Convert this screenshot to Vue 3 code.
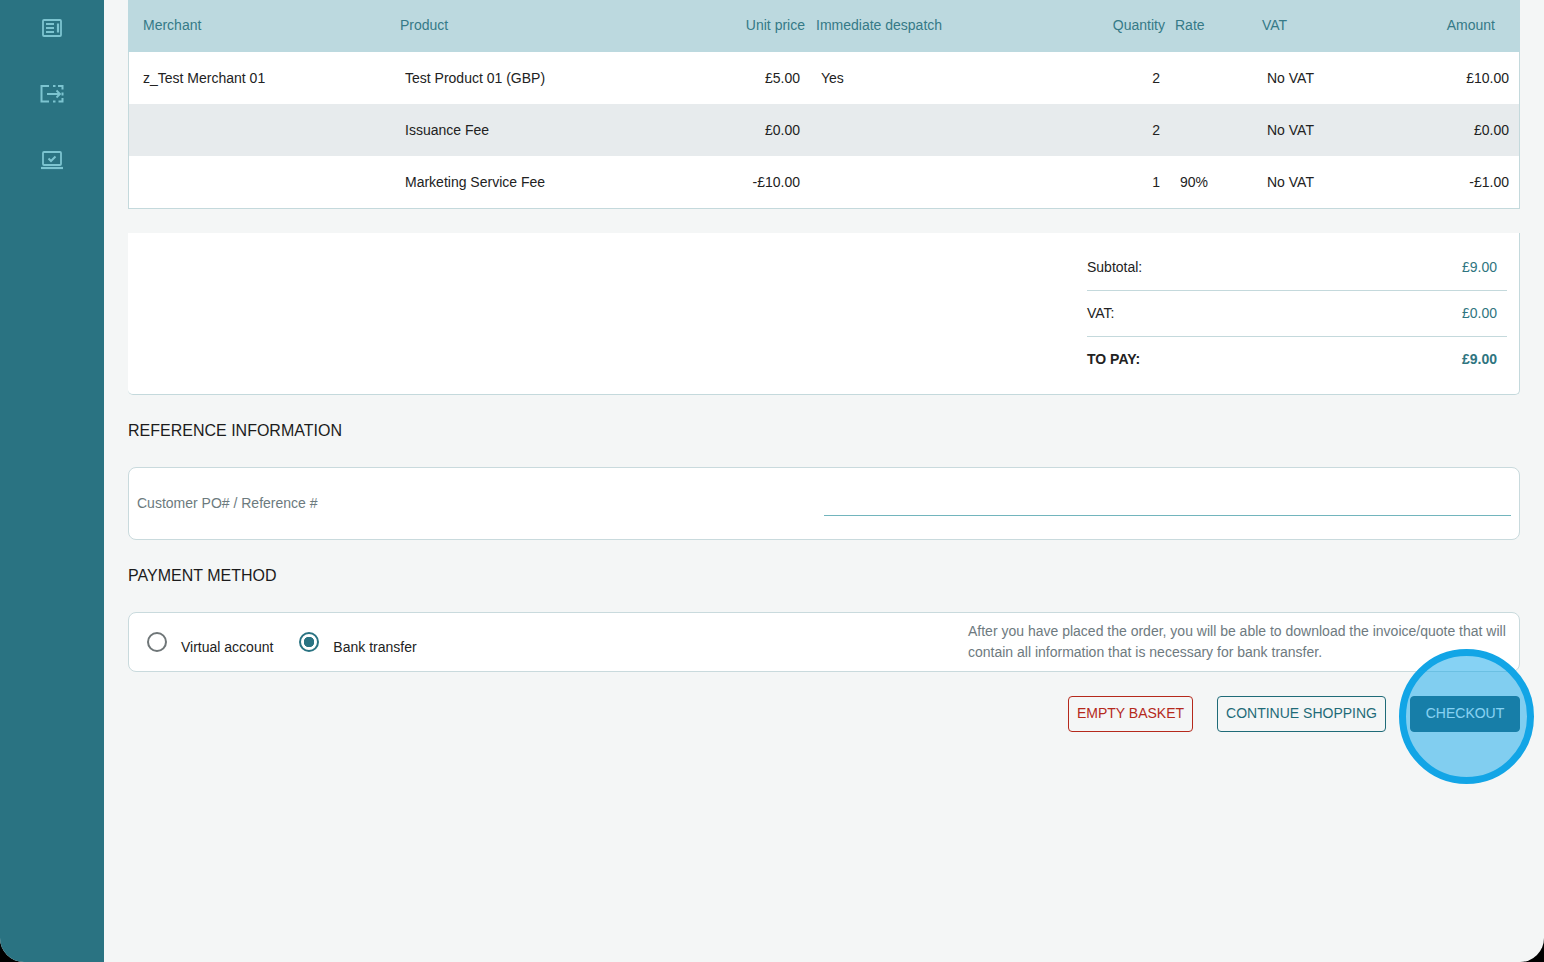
<template>
  <div class="app">
    <!-- side menu -->
    <aside class="sidebar">
      <a class="nav-item">
        <svg width="24" height="24" viewBox="0 0 24 24" fill="none" stroke="#7cc4d0" stroke-width="1.8">
          <rect x="3" y="4" width="18" height="16" rx="1" />
          <path d="M6 8h8M6 12h8M6 16h8" />
          <path d="M18 7.500v9" stroke-width="2.200" />
        </svg>
      </a>
      <a class="nav-item">
        <svg width="24" height="24" viewBox="0 0 24 24" fill="none" stroke="#7cc4d0" stroke-width="2">
          <path d="M9 4h-7.500v15.500H9" />
          <path d="M13 4h2.500M18 4h4.500v3.500M22.500 10.500v3M22.500 16v3.500h-4M15.500 19.500H13" />
          <path d="M7 12h13M16.500 8.500L20 12l-3.500 3.500" stroke-width="1.800" />
        </svg>
      </a>
      <a class="nav-item">
        <svg width="24" height="24" viewBox="0 0 24 24" fill="none" stroke="#7cc4d0" stroke-width="1.8">
          <rect x="3" y="4" width="18" height="13" rx="1" />
          <path d="M1 20h22" stroke-width="2.200" />
          <path d="M8.500 10.500l2.500 2.500 4.500-4.500" stroke-width="2" />
        </svg>
      </a>
    </aside>

    <main class="main">
      <!-- order lines -->
      <div class="lines">
        <div class="line line-head">
          <div v-for="col in columns" :key="col.label" class="cell" :class="{ right: col.right }">{{ col.label }}</div>
        </div>
        <div v-for="row in rows" :key="row.product" class="line" :class="{ grey: row.grey }">
          <div class="cell">{{ row.merchant }}</div>
          <div class="cell">{{ row.product }}</div>
          <div class="cell right">{{ row.price }}</div>
          <div class="cell">{{ row.despatch }}</div>
          <div class="cell right">{{ row.qty }}</div>
          <div class="cell">{{ row.rate }}</div>
          <div class="cell">{{ row.vat }}</div>
          <div class="cell right">{{ row.amount }}</div>
        </div>
      </div>

      <!-- totals -->
      <div class="totals">
        <div class="totals-inner">
          <div class="total-row"><span>Subtotal:</span><span class="val">£9.00</span></div>
          <div class="total-row"><span>VAT:</span><span class="val">£0.00</span></div>
          <div class="total-row bold"><span>TO PAY:</span><span class="val">£9.00</span></div>
        </div>
      </div>

      <h2 class="section-title">REFERENCE INFORMATION</h2>
      <div class="card ref-card">
        <label class="ref-label">Customer PO# / Reference #</label>
        <div class="ref-input"></div>
      </div>

      <h2 class="section-title">PAYMENT METHOD</h2>
      <div class="card pay-card">
        <div class="radios">
          <div class="radio-item">
            <span class="radio"></span>
            <span class="radio-label">Virtual account</span>
          </div>
          <div class="radio-item">
            <span class="radio checked"></span>
            <span class="radio-label">Bank transfer</span>
          </div>
        </div>
        <p class="pay-note">After you have placed the order, you will be able to download the invoice/quote that will contain all information that is necessary for bank transfer.</p>
      </div>

      <!-- actions -->
      <div class="actions">
        <button class="btn btn-red">EMPTY BASKET</button>
        <button class="btn btn-outline">CONTINUE SHOPPING</button>
        <button class="btn btn-solid">CHECKOUT</button>
      </div>
    </main>

    <!-- highlight over checkout button -->
    <div class="spot"></div>
  </div>
</template>

<script setup>
const columns = [
  { label: 'Merchant' },
  { label: 'Product' },
  { label: 'Unit price', right: true },
  { label: 'Immediate despatch' },
  { label: 'Quantity', right: true },
  { label: 'Rate' },
  { label: 'VAT' },
  { label: 'Amount', right: true }
]

const rows = [
  { merchant: 'z_Test Merchant 01', product: 'Test Product 01 (GBP)', price: '£5.00', despatch: 'Yes', qty: 2, rate: '', vat: 'No VAT', amount: '£10.00' },
  { merchant: '', product: 'Issuance Fee', price: '£0.00', despatch: '', qty: 2, rate: '', vat: 'No VAT', amount: '£0.00', grey: true },
  { merchant: '', product: 'Marketing Service Fee', price: '-£10.00', despatch: '', qty: 1, rate: '90%', vat: 'No VAT', amount: '-£1.00' }
]
</script>

<style>
html,
body {
  margin: 0;
  background: #000;
}
</style>

<style scoped>
.app {
  position: relative;
  display: flex;
  width: 1544px;
  height: 962px;
  overflow: hidden;
  border-radius: 0 0 24px 24px;
  background: #f4f6f6;
  font-family: "Liberation Sans", Arial, sans-serif;
  font-size: 14px;
  color: #222;
}
.sidebar {
  flex: 0 0 104px;
  display: flex;
  flex-direction: column;
  align-items: center;
  gap: 22px;
  padding-top: 6px;
  background: #2a7382;
}
.nav-item {
  display: flex;
  align-items: center;
  justify-content: center;
  width: 44px;
  height: 44px;
}
.main {
  flex: 1;
  padding: 0 24px;
}

/* 表格 */
.lines {
  border: 1px solid #c4d9dc;
  border-top: 0;
  background: #fff;
}
.line {
  display: grid;
  grid-template-columns: 266px 225px 191px 221px 138px 87px 150px 112px;
  height: 52px;
  align-items: center;
}
.line-head {
  box-sizing: border-box;
  background: #bcd9df;
  color: #357a87;
  margin: 0 -1px;
  padding: 0 1px 2px;
}
.grey {
  background: #e7ebed;
}
.cell {
  padding: 0 10px;
  white-space: nowrap;
}
.line-head .cell {
  padding: 0 5px;
}
.cell:first-child,
.line-head .cell:first-child {
  padding-left: 14px;
}
.cell:nth-child(3) {
  padding-right: 11px;
}
.line-head .cell:nth-child(3) {
  padding-right: 6px;
}
.line-head .cell:last-child {
  padding-right: 24px;
}
.right {
  text-align: right;
}

/* 合计 */
.totals {
  margin-top: 24px;
  padding: 12px 12px 11px 0;
  display: flex;
  justify-content: flex-end;
  background: #fff;
  border-right: 1px solid #c4d9dc;
  border-bottom: 1px solid #c4d9dc;
  border-radius: 0 0 5px 5px;
}
.totals-inner {
  width: 420px;
}
.total-row {
  display: flex;
  justify-content: space-between;
  align-items: center;
  height: 46px;
  box-sizing: border-box;
  padding: 0 10px 2px 0;
  border-bottom: 1px solid #c4d9dc;
}
.total-row:last-child {
  border-bottom: 0;
}
.val {
  color: #2f7580;
}
.bold {
  font-weight: bold;
}

.section-title {
  margin: 0;
  height: 72px;
  line-height: 71px;
  font-size: 16px;
  font-weight: normal;
  color: #1c1c1c;
}
.card {
  box-sizing: border-box;
  display: flex;
  background: #fff;
  border: 1px solid #c9dadd;
  border-radius: 8px;
}
.ref-card {
  height: 73px;
  align-items: center;
  justify-content: space-between;
  padding: 0 8px 2px;
}
.ref-label {
  color: #6c7a7e;
}
.ref-input {
  align-self: flex-end;
  width: 687px;
  height: 24px;
  margin-bottom: 21px;
  border-bottom: 1px solid #72b5bd;
}
.pay-card {
  height: 60px;
  justify-content: space-between;
  padding: 0 12px 0 18px;
}
.radios {
  display: flex;
  gap: 26px;
}
.radio-item {
  display: flex;
  gap: 14px;
}
.radio {
  box-sizing: border-box;
  width: 20px;
  height: 20px;
  margin-top: 19px;
  border: 2px solid #6f7678;
  border-radius: 50%;
}
.radio.checked {
  border-color: #2a7382;
  background: radial-gradient(circle, #2a7382 0 5px, transparent 5.5px);
}
.radio-label {
  margin-top: 26px;
  line-height: 16px;
}
.pay-note {
  width: 539px;
  margin: 8px 0 0;
  line-height: 21px;
  color: #6e7a80;
}

.actions {
  display: flex;
  justify-content: flex-end;
  gap: 24px;
  margin-top: 24px;
}
.btn {
  box-sizing: border-box;
  height: 36px;
  padding: 0 0 2px;
  border: 1px solid;
  border-radius: 4px;
  background: transparent;
  font-family: inherit;
  font-size: 14px;
  white-space: nowrap;
}
.btn-red {
  width: 125px;
  color: #b5291c;
  border-color: #b5291c;
}
.btn-outline {
  width: 169px;
  color: #1f6b78;
  border-color: #1f6b78;
}
.btn-solid {
  width: 110px;
  color: #fff;
  background: #205767;
  border-color: #205767;
}
.spot {
  position: absolute;
  left: 1399px;
  top: 649px;
  box-sizing: border-box;
  width: 135px;
  height: 135px;
  border: 7px solid #12a5e6;
  border-radius: 50%;
  background: rgba(14, 165, 233, 0.5);
}
</style>
